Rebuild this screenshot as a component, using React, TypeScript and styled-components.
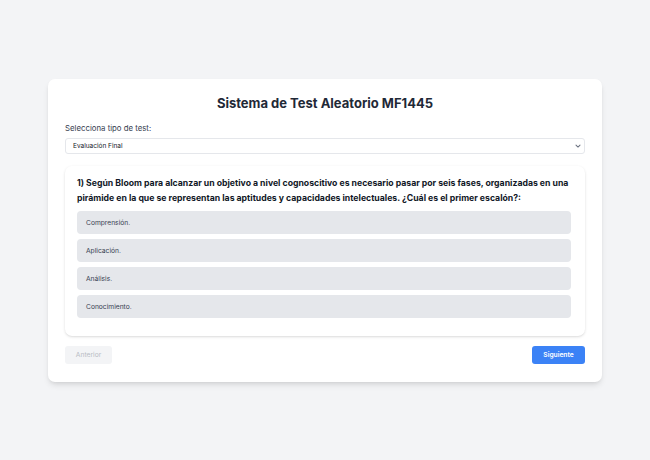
import styled, { createGlobalStyle } from 'styled-components'
import { useState } from 'react'

const GlobalStyle = createGlobalStyle`
  html, body {
    margin: 0;
    padding: 0;
    background: #f3f4f6;
    font-family: Inter, "Liberation Sans", sans-serif;
  }
`

const options = ['Comprensión.', 'Aplicación.', 'Análisis.', 'Conocimiento.']

const App = () => {
  const [testType, setTestType] = useState('final')

  return (
    <>
      <GlobalStyle />
      <S_Page>
        <S_Card>
          <S_Title>Sistema de Test Aleatorio MF1445</S_Title>
          <S_Label htmlFor='tipo'>Selecciona tipo de test:</S_Label>
          <S_SelectWrap>
            <S_Select id='tipo' value={testType} onChange={(e) => setTestType(e.target.value)}>
              <option value='final'>Evaluación Final</option>
            </S_Select>
            <S_Chevron viewBox='0 0 10 10' aria-hidden>
              <path d='M2.5 3.8 L5 6.3 L7.5 3.8' fill='none' stroke='#6b7280' strokeWidth='1.3' strokeLinecap='round' strokeLinejoin='round' />
            </S_Chevron>
          </S_SelectWrap>
          <S_Question>
            <S_QuestionText>
              1) Según Bloom para alcanzar un objetivo a nivel cognoscitivo es necesario pasar por seis fases, organizadas en una pirámide en la que se representan las aptitudes y capacidades intelectuales. ¿Cuál es el primer escalón?:
            </S_QuestionText>
            <S_Options>
              {options.map((o) => (
                <S_Option key={o}>{o}</S_Option>
              ))}
            </S_Options>
          </S_Question>
          <S_Nav>
            <S_Button disabled>Anterior</S_Button>
            <S_Button $primary>Siguiente</S_Button>
          </S_Nav>
        </S_Card>
      </S_Page>
    </>
  )
}

export default App

const S_Page = styled.div`
  width: 650px;
  height: 460px;
  display: flex;
  justify-content: center;
  padding-top: 79px;
  box-sizing: border-box;
`

const S_Card = styled.div`
  width: 554px;
  height: 303px;
  box-sizing: border-box;
  background: #fff;
  border-radius: 7px;
  box-shadow: 0 4px 6px -1px rgba(0, 0, 0, 0.1), 0 2px 4px -2px rgba(0, 0, 0, 0.1);
  padding: 14px 17px 18px;
  display: flex;
  flex-direction: column;
`

const S_Title = styled.h1`
  margin: 0 0 9px;
  text-align: center;
  font-size: 13px;
  line-height: 20px;
  font-weight: 700;
  color: #1f2937;
`

const S_Label = styled.label`
  font-size: 7.8px;
  line-height: 12px;
  color: #374151;
  margin-bottom: 4px;
`

const S_SelectWrap = styled.div`
  position: relative;
  margin-bottom: 12px;
`

const S_Select = styled.select`
  display: block;
  appearance: none;
  height: 16px;
  width: 100%;
  font-family: Inter, "Liberation Sans", sans-serif;
  font-size: 6.5px;
  color: #111827;
  background: #fff;
  border: 1px solid #e5e7eb;
  border-radius: 3px;
  padding: 0 7px;
  outline: none;
`

const S_Chevron = styled.svg`
  position: absolute;
  right: 3px;
  top: 4px;
  width: 8px;
  height: 8px;
  pointer-events: none;
`

const S_Question = styled.div`
  background: #fff;
  border-radius: 7px;
  box-shadow: 0 1px 3px rgba(0, 0, 0, 0.12), 0 1px 2px -1px rgba(0, 0, 0, 0.1);
  padding: 10px 14px 18px 12px;
`

const S_QuestionText = styled.p`
  margin: 0 0 5px;
  font-size: 8.7px;
  line-height: 15px;
  font-weight: 700;
  color: #111827;
`

const S_Options = styled.div`
  display: flex;
  flex-direction: column;
  gap: 5px;
`

const S_Option = styled.div`
  height: 23px;
  display: flex;
  align-items: center;
  padding: 0 9px;
  background: #e5e7eb;
  border-radius: 4px;
  font-size: 6.7px;
  color: #374151;
`

const S_Nav = styled.div`
  display: flex;
  justify-content: space-between;
  margin-top: 10px;
`

const S_Button = styled.button<{ $primary?: boolean }>`
  height: 18px;
  padding: 0 9px;
  border: none;
  border-radius: 3px;
  font-family: Inter, "Liberation Sans", sans-serif;
  font-size: 6.7px;
  font-weight: ${(p) => (p.$primary ? 600 : 400)};
  color: ${(p) => (p.$primary ? '#fff' : '#b8bcc4')};
  background: ${(p) => (p.$primary ? '#3b82f6' : '#f3f4f6')};
  min-width: ${(p) => (p.$primary ? '53px' : '47px')};
`
